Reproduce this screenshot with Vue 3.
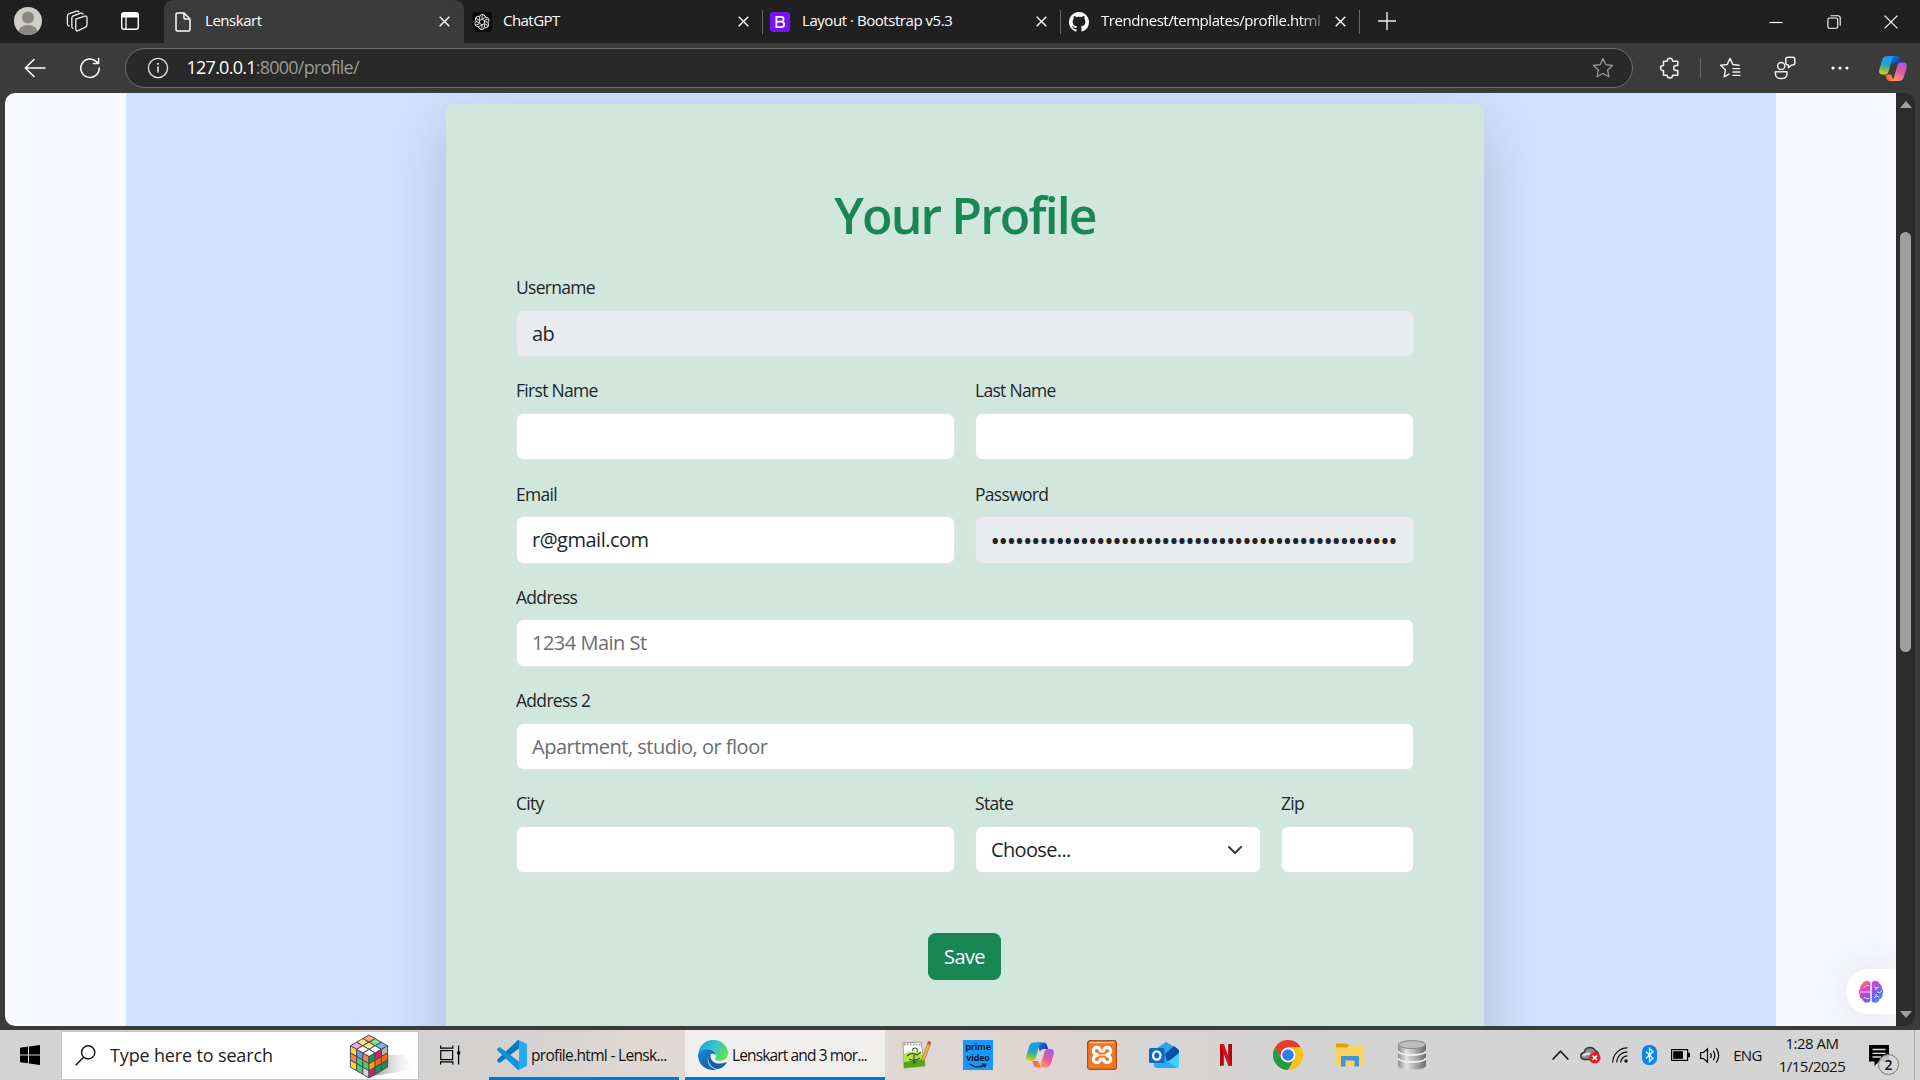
<script setup>
const tabs = [
  { title: 'Lenskart', icon: 'doc', active: true, cls: 't1' },
  { title: 'ChatGPT', icon: 'gpt', cls: 't2' },
  { title: 'Layout · Bootstrap v5.3', icon: 'boot', cls: 't3' },
  { title: 'Trendnest/templates/profile.html', icon: 'git', cls: 't4' },
]
const password = '•'.repeat(50)

const A = [25, 8.5]
const step = { r: [6.2, 3.6], l: [-6.2, 3.6], d: [0, 7.1] }
const quad = (o, u, v) => {
  const p = (a, b) => `${(o[0] + a * u[0] + b * v[0]).toFixed(1)},${(o[1] + a * u[1] + b * v[1]).toFixed(1)}`
  return (i, j) => [p(i, j), p(i + 1, j), p(i + 1, j + 1), p(i, j + 1)].join(' ')
}
const face = (o, u, v, colors) => {
  const q = quad(o, u, v)
  return colors.map((fill, k) => ({ fill, points: q(k % 3, Math.floor(k / 3)) }))
}
const cube = [
  ...face([A[0] - 5, 2], step.r, step.l, ['#f6ad7b', '#74e291', '#6db9f7', '#fbe28a', '#fbe28a', '#fff', '#f9a8d4', '#fff', '#fff']),
  ...face([1.4, 12.8], step.r, step.d, ['#fdd835', '#5b9cf5', '#ff7f50', '#ff7f50', '#45cf74', '#45cf74', '#fdd835', '#45cf74', '#d8d8d8']),
  ...face([20, 23.6], [6.2, -3.6], step.d, ['#268c56', '#d81b78', '#b5b5b5', '#f5a60a', '#f26a0f', '#f26a0f', '#d81b78', '#268c56', '#268c56']),
]
</script>

<template>
  <div class="screen">
    <svg class="defs" width="0" height="0" aria-hidden="true">
      <defs>
        <linearGradient id="cpA" x1="0.3" y1="0" x2="0.1" y2="1">
          <stop offset="0" stop-color="#199de8" /><stop offset=".45" stop-color="#2aa3c4" /><stop offset=".72" stop-color="#7cc051" /><stop offset="1" stop-color="#ffd000" />
        </linearGradient>
        <linearGradient id="cpB" x1="0.8" y1="0" x2="0.3" y2="1">
          <stop offset="0" stop-color="#a259f0" /><stop offset=".5" stop-color="#e558a0" /><stop offset="1" stop-color="#ff9a5c" />
        </linearGradient>
        <linearGradient id="cpC" x1="0" y1="0" x2="1" y2="0.6">
          <stop offset="0" stop-color="#1b8ee8" /><stop offset="1" stop-color="#1735b8" />
        </linearGradient>
        <linearGradient id="cpD" x1="0" y1="0" x2="1" y2="1">
          <stop offset="0" stop-color="#ff5a4e" /><stop offset="1" stop-color="#ff8a3d" />
        </linearGradient>
        <linearGradient id="edgeTop" x1="0" y1="0.2" x2="1" y2="0.6">
          <stop offset="0" stop-color="#2a9fdd" /><stop offset=".5" stop-color="#2fc3d4" /><stop offset="1" stop-color="#66e04b" />
        </linearGradient>
        <linearGradient id="edgeLow" x1="0" y1="0" x2="1" y2="1">
          <stop offset="0" stop-color="#1c8fdc" /><stop offset="1" stop-color="#0c4f9c" />
        </linearGradient>
        <linearGradient id="brainG" x1="0" y1="0" x2="1" y2="1">
          <stop offset="0" stop-color="#ff9a3c" /><stop offset=".3" stop-color="#e83fc0" /><stop offset=".6" stop-color="#7a5af5" /><stop offset="1" stop-color="#1fa2ff" />
        </linearGradient>
        <linearGradient id="dbG" x1="0" y1="0" x2="1" y2="0">
          <stop offset="0" stop-color="#8c8c8c" /><stop offset=".3" stop-color="#e4e4e4" /><stop offset="1" stop-color="#6c6c6c" />
        </linearGradient>
        <linearGradient id="shadeG" x1="0" y1="0" x2="1" y2="0">
          <stop offset="0" stop-color="#777" /><stop offset="1" stop-color="#fff" stop-opacity="0" />
        </linearGradient>
        <symbol id="copilot" viewBox="0 0 28 26">
          <path d="M9 0.5H17.5C19.5 .5 20.6 1.6 21.2 3.6L22 7H17.5C15.6 7 14.6 8 14 10L11 .5Z" fill="url(#cpC)" />
          <path d="M7.5 19H12L15 25.5H11C9 25.5 8 24.5 7.4 22.5L6.3 19Z" fill="url(#cpD)" />
          <path d="M8.5 .5H16C14.2 .8 13.6 2.2 13 4.2L9.8 15.2C9 18 8 19 5.5 19H3.6C.6 19 -.4 17 .4 13.8L3 4.8C3.9 1.8 5.5 .5 8.5 .5Z" fill="url(#cpA)" />
          <path d="M22.4 7H24.4C27.4 7 28.4 9 27.6 12.2L25 21.2C24.1 24.2 22.5 25.5 19.5 25.5H12C13.8 25.2 14.4 23.8 15 21.8L18.2 10.8C19 8 20 7 22.4 7Z" fill="url(#cpB)" />
        </symbol>
      </defs>
    </svg>

    <header class="tabstrip">
      <div class="lead">
        <svg class="avatar" width="28" height="28" viewBox="0 0 28 28">
          <clipPath id="av"><circle cx="14" cy="14" r="14" /></clipPath>
          <g clip-path="url(#av)"><rect width="28" height="28" fill="#cfcdca" /><circle cx="14" cy="10.5" r="6" fill="#8c8680" /><ellipse cx="14" cy="25" rx="9.5" ry="7" fill="#8c8680" /></g>
        </svg>
        <svg class="spaces" width="22" height="22" viewBox="0 0 22 22" fill="none" stroke="#eee" stroke-width="1.3" stroke-linejoin="round" stroke-linecap="round">
          <path d="M9.8 9.2 18.8 6.2Q21 5.6 21 7.6V14.5Q21 16.5 19.4 17.2L12.2 20.6Q9.8 21.4 9.8 19.2Z" />
          <path d="M7 18.3Q5.8 18 5.8 16.3V8.2Q5.8 6.5 7.2 5.8L14.8 3.2Q16.8 2.8 17 4.2" />
          <path d="M3 16Q1.4 15.6 1.4 13.8V6.2Q1.4 4.6 2.8 3.8L10.6 1.2Q12.4 .8 12.8 2" />
        </svg>
        <svg class="vtabs" width="20" height="20" viewBox="0 0 20 20">
          <rect x="1.7" y="1.7" width="16.6" height="16.6" rx="2.6" fill="none" stroke="#fff" stroke-width="1.4" /><path d="M1.5 6.5V4A3 3 0 0 1 4 1.5H16A3 3 0 0 1 18.5 4V6.5Z" fill="#fff" /><path d="M6 6V18" stroke="#fff" stroke-width="1.3" />
        </svg>
      </div>
      <div v-for="t in tabs" :key="t.title" class="tab" :class="[{ active: t.active }, t.cls]">
        <svg v-if="t.icon === 'doc'" class="fav" width="20" height="20" viewBox="0 0 20 20" fill="none" stroke="#fff" stroke-width="1.5" stroke-linejoin="round"><path d="M4.5 1H11L17 7V17.5Q17 19 15.5 19H4.5Q3 19 3 17.5V2.5Q3 1 4.5 1ZM11 1V5.8Q11 7 12.2 7H17" /></svg>
        <svg v-else-if="t.icon === 'gpt'" class="fav" width="20" height="20" viewBox="0 0 20 20"><rect width="20" height="20" rx="3.5" fill="#0b0b0b" /><g fill="none" stroke="#ddd" stroke-width="1"><path v-for="a in 6" :key="a" :transform="`rotate(${a * 60} 10 10)`" d="M10 7.2 13.2 5.4Q16.2 4.6 17 7.6Q17.3 9 16.2 10.6M10 7.2V4.6Q10.2 3.4 11.4 3" /><path d="M10 7.2 12.4 8.6V11.4L10 12.8 7.6 11.4V8.6Z" /></g></svg>
        <svg v-else-if="t.icon === 'boot'" class="fav" width="20" height="20" viewBox="0 0 20 20"><rect width="20" height="20" rx="3" fill="#7a12f7" /><path d="M6.4 4.8H11Q13.6 4.8 13.6 7.2 13.6 9 11.9 9.6 14.2 10 14.2 12.3 14.2 15.2 11 15.2H6.4ZM6.4 9.6H11" fill="none" stroke="#fff" stroke-width="1.8" /></svg>
        <svg v-else class="fav" width="20" height="20" viewBox="0 0 16 16"><path fill="#fff" d="M8 0C3.58 0 0 3.58 0 8c0 3.54 2.29 6.53 5.47 7.59.4.07.55-.17.55-.38 0-.19-.01-.82-.01-1.49-2.01.37-2.53-.49-2.69-.94-.09-.23-.48-.94-.82-1.13-.28-.15-.68-.52-.01-.53.63-.01 1.08.58 1.23.82.72 1.21 1.87.87 2.33.66.07-.52.28-.87.51-1.07-1.78-.2-3.64-.89-3.64-3.95 0-.87.31-1.59.82-2.15-.08-.2-.36-1.02.08-2.12 0 0 .67-.21 2.2.82.64-.18 1.32-.27 2-.27s1.36.09 2 .27c1.53-1.04 2.2-.82 2.2-.82.44 1.1.16 1.92.08 2.12.51.56.82 1.27.82 2.15 0 3.07-1.87 3.75-3.65 3.95.29.25.54.73.54 1.48 0 1.07-.01 1.93-.01 2.2 0 .21.15.46.55.38A8.01 8.01 0 0 0 16 8c0-4.42-3.58-8-8-8z" /></svg>
        <span class="tab-title">{{ t.title }}</span>
        <svg class="x" width="11" height="11" viewBox="0 0 11 11"><path d="M.7.7 10.3 10.3M10.3.7.7 10.3" stroke="#fff" stroke-width="1.4" /></svg>
      </div>
      <svg class="plus" width="18" height="18" viewBox="0 0 18 18"><path d="M9 0V18M0 9H18" stroke="#eee" stroke-width="1.4" /></svg>
      <div class="winctl">
        <svg width="14" height="14" viewBox="0 0 14 14"><path d="M.5 7.5H13.5" stroke="#fff" stroke-width="1.2" /></svg>
        <svg width="14" height="14" viewBox="0 0 14 14" fill="none" stroke="#fff" stroke-width="1.1"><rect x=".9" y="3" width="9.8" height="10.2" rx="1.5" /><path d="M3.5 .8H11Q13.2 .8 13.2 3V10.8" /></svg>
        <svg width="14" height="14" viewBox="0 0 14 14"><path d="M.6.6 13.4 13.4M13.4.6.6 13.4" stroke="#fff" stroke-width="1.2" /></svg>
      </div>
    </header>

    <div class="toolbar">
      <svg class="back" width="22" height="20" viewBox="0 0 22 20" fill="none" stroke="#fff" stroke-width="1.5" stroke-linecap="round" stroke-linejoin="round"><path d="M21 10H1.5M10 1.5 1.3 10 10 18.5" /></svg>
      <svg class="reload" width="22" height="22" viewBox="0 0 22 22" fill="none" stroke="#fff" stroke-width="1.5" stroke-linecap="round" stroke-linejoin="round"><path d="M20.2 11A9.2 9.2 0 1 1 17.6 4.8L19.2 6.4M19.6 1.4V6.6H14.4" /></svg>
      <div class="omnibox">
        <svg width="22" height="22" viewBox="0 0 22 22" fill="none" stroke="#e6e6e6" stroke-width="1.3"><circle cx="11" cy="11" r="9.6" /><path d="M11 9.6V15.6" stroke-width="1.6" /><circle cx="11" cy="6.8" r="1.1" fill="#e6e6e6" stroke="none" /></svg>
        <span class="url"><b>127.0.0.1</b>:8000/profile/</span>
        <svg class="star" width="22" height="22" viewBox="0 0 22 22" fill="none" stroke="#999" stroke-width="1.3" stroke-linejoin="round"><path d="M11 1.6 13.8 7.6 20.5 8.5 15.6 13 16.9 19.8 11 16.5 5.1 19.8 6.4 13 1.5 8.5 8.2 7.6Z" /></svg>
      </div>
      <div class="tools">
        <svg width="22" height="22" viewBox="0 0 22 22" fill="none" stroke="#eee" stroke-width="1.5" stroke-linejoin="round"><path d="M4.5 4.2H8.2C8.2 2.4 9.3 1.2 10.9 1.2S13.6 2.4 13.6 4.2H18.8V8.6H17.2A2.5 2.5 0 0 0 17.2 13.6H18.8V18.2H13.6C13.6 19.9 12.5 21 10.9 21S8.2 19.9 8.2 18.2H4.5V13.6C2.7 13.6 1.5 12.6 1.5 11.1S2.7 8.6 4.5 8.6Z" /></svg>
        <i class="sep"></i>
        <svg class="favs" width="22" height="22" viewBox="0 0 22 22" fill="none" stroke="#eee" stroke-width="1.4" stroke-linejoin="round" stroke-linecap="round"><path d="M20 8.3 13.8 7.5 11 1.4 8.2 7.5 1.5 8.3 6.4 12.8 5.2 19.8 10 17.2M14 11.6H20.8M14 15H20.8M14 18.4H20.8" /></svg>
        <svg class="ppl" width="22" height="24" viewBox="0 0 22 24" fill="none" stroke="#eee" stroke-width="1.5" stroke-linejoin="round"><circle cx="7.2" cy="10" r="3.6" /><path d="M1.4 15.8H13V17.4C13 20.6 10.6 22.6 7.2 22.6S1.4 20.6 1.4 17.4ZM13.8 1.2H18.8Q20.8 1.2 20.8 3.2V7Q20.8 9 18.8 9H17.6L14.4 11.6V9Q11.8 9 11.8 7V3.2Q11.8 1.2 13.8 1.2Z" /></svg>
        <svg class="dots" width="18" height="6" viewBox="0 0 18 6" fill="#fff"><circle cx="2" cy="3" r="1.6" /><circle cx="9" cy="3" r="1.6" /><circle cx="16" cy="3" r="1.6" /></svg>
        <svg class="cp" width="28" height="27"><use href="#copilot" /></svg>
      </div>
    </div>

    <div class="viewport">
      <main class="page">
        <div class="band">
          <form class="card" @submit.prevent>
            <h1>Your Profile</h1>
            <div class="row"><div class="field w12"><label>Username</label><div class="input off val">ab</div></div></div>
            <div class="row">
              <div class="field w6"><label>First Name</label><div class="input"></div></div>
              <div class="field w6"><label>Last Name</label><div class="input"></div></div>
            </div>
            <div class="row">
              <div class="field w6"><label>Email</label><div class="input val">r@gmail.com</div></div>
              <div class="field w6"><label>Password</label><div class="input off pass">{{ password }}</div></div>
            </div>
            <div class="row"><div class="field w12"><label>Address</label><div class="input ph">1234 Main St</div></div></div>
            <div class="row"><div class="field w12"><label>Address 2</label><div class="input ph">Apartment, studio, or floor</div></div></div>
            <div class="row">
              <div class="field w6"><label>City</label><div class="input"></div></div>
              <div class="field w4"><label>State</label>
                <div class="input val select">Choose...<svg width="16" height="16" viewBox="0 0 16 16" fill="none" stroke="#343a40" stroke-width="2" stroke-linecap="round" stroke-linejoin="round"><path d="m2 5 6 6 6-6" /></svg></div>
              </div>
              <div class="field w2"><label>Zip</label><div class="input"></div></div>
            </div>
            <button class="save">Save</button>
          </form>
        </div>
        <div class="brain">
          <svg width="26" height="24" viewBox="0 0 26 24"><path d="M12.3 2.5Q10.5.3 8.2 1 5 .8 4.4 4 1.8 5.4 2.4 8.2 -.4 11 1.6 14.2 1 17.8 4.4 19 6 23.4 9.6 22.6 11.6 22.8 12.3 21Z M13.7 2.5Q15.5.3 17.8 1 21 .8 21.6 4 24.2 5.4 23.6 8.2 26.4 11 24.4 14.2 25 17.8 21.6 19 20 23.4 16.4 22.6 14.4 22.8 13.7 21Z" fill="url(#brainG)" /><path d="M2 12H12M6 7Q8 7 8.5 5.5H11M6 17Q8 19 11 18.5M16 6 18 8 21 7.5M18 8V10M24 11Q22 13.5 19 12M16 18 18 16 21 17M18 16V14" fill="none" stroke="#fff" stroke-opacity=".8" stroke-width="1" /></svg>
        </div>
      </main>
      <div class="scrollbar"><i class="up"></i><div class="thumb"></div><i class="down"></i></div>
    </div>

    <footer class="taskbar">
      <div class="start"><svg width="20" height="20" viewBox="0 0 20 20"><path d="M0 2.8 8 1.6V9.4H0ZM9 1.4 20 0V9.4H9ZM0 10.4H8V18.3L0 17.2ZM9 10.4H20V20L9 18.5Z" /></svg></div>
      <div class="search">
        <svg class="mag" width="21" height="21" viewBox="0 0 21 21" fill="none" stroke="#111" stroke-width="1.4"><circle cx="13.2" cy="7.4" r="6.6" /><path d="M8.6 12.2.6 20.2" /></svg>
        <span>Type here to search</span>
        <svg class="cube" width="68" height="46" viewBox="0 0 68 46">
          <path d="M34 22H54L68 36 24 43Z" fill="url(#shadeG)" opacity=".8" />
          <polygon v-for="(f, i) in cube" :key="i" :points="f.points" :fill="f.fill" stroke="#4a4a4a" stroke-width="1" stroke-linejoin="round" />
        </svg>
      </div>
      <div class="tview"><svg width="21" height="20" viewBox="0 0 21 20" fill="none" stroke="#000" stroke-width="1.2"><rect x=".8" y="5.6" width="11.8" height="9" /><path d="M.6 .5V3.2H12.8V.5M.6 19.5V16.8H12.8V19.5M18.6 .5V19.5" /><rect x="17.2" y="6.4" width="3" height="3" fill="#000" stroke="none" /></svg></div>
      <div class="task vs">
        <svg width="30" height="30" viewBox="0 0 30 30"><path d="M22 .3 29 3.6Q30 4 30 5.4V24.6Q30 26 29 26.4L22 29.7Z" fill="#29a9f2" /><path d="M22 .3V8.4L3.4 22.6Q2.6 23.1 1.8 22.5L.4 21.2Q-.4 20.4.4 19.5L20.4.6Q21 0 22 .3Z" fill="#0a79c4" /><path d="M22 29.7V21.6L3.4 7.4Q2.6 6.9 1.8 7.5L.4 8.8Q-.4 9.6.4 10.5L20.4 29.4Q21 30 22 29.7Z" fill="#0f92dc" /></svg>
        <span>profile.html - Lensk...</span>
      </div>
      <div class="task edge">
        <svg width="30" height="30" viewBox="0 0 30 30"><path d="M.3 14C1 6 7 0 15 0 24 0 30 6.2 30 13 30 18 26.400 20.800 22 20.800 18 20.800 16.600 19.400 17.400 18 19.400 14.600 18 9.500 11 9.500 5.500 9.500 1.500 12.500.3 16Z" fill="url(#edgeTop)" /><path d="M0 15C.8 11.500 4.500 9.200 9.500 9.200 14 9.200 17.800 11.500 18 15 14 11.800 9.200 15.400 9.800 20.400 10.200 25.600 14 29 19 29.300 9 32 0 25 0 15Z" fill="url(#edgeLow)" /><path d="M10.500 15.500C8.500 23 15 31 22 28.600 25 27.200 27 25.500 28.500 23 28.800 22.300 28.300 22 27.700 22.300 20.500 25.200 12 23 12.500 15 12.200 13.800 11 14 10.500 15.500Z" fill="#1261ae" /></svg>
        <span>Lenskart and 3 mor...</span>
      </div>
      <div class="pins">
        <div><svg width="30" height="30" viewBox="0 0 30 30"><path d="M2 3 20 2 24 26 3 28Z" fill="#fff" stroke="#888" stroke-width=".8" /><path d="M2.500 14Q12 9 22 14L24 26 3 28Z" fill="#b6e34a" /><path d="M3 22 23.500 19 24 26 3 28Z" fill="#51a812" /><path d="M3 4.500H20" stroke="#999" stroke-dasharray="1.500 1.500" stroke-width="2" /><path d="M6 16Q10 12 16 15L20 12M8 19Q13 22 19 18M12 11Q11 8 14 8T16 12M13 15V23L16 22" fill="none" stroke="#2f5a20" stroke-width="1.200" /><path d="M27.500 1 30 2.500 23.500 20 21 22 21 18.500Z" fill="#f2b63c" stroke="#93601d" stroke-width=".6" /><path d="M27.500 1 30 2.500 29 5.500 26.400 4Z" fill="#c8535b" /></svg></div>
        <div><div class="prime"><span>prime</span><span>video</span><svg width="22" height="6" viewBox="0 0 22 7" fill="none" stroke="#062033" stroke-width="1.500"><path d="M1 .8Q9 7 18.500 2.800M15.500 1.200 20 1.200 18.800 5" /></svg></div></div>
        <div><svg width="28" height="26"><use href="#copilot" /></svg></div>
        <div><svg width="30" height="30" viewBox="0 0 30 30"><rect x=".6" y=".6" width="28.800" height="28.800" rx="2.500" fill="#f37623" stroke="#a9501a" stroke-width="1.200" /><path d="M3 2.600H27" stroke="#fbb98a" stroke-width="1.500" /><path d="M10 11.500 20 18.500M20 11.500 10 18.500" stroke="#fff" stroke-width="5" /><path d="M11.500 12.500H18.500V17.500H11.500Z" fill="#fff" /><g fill="#f37623" stroke="#fff" stroke-width="3.200"><circle cx="9.800" cy="10.800" r="3.500" /><circle cx="20.200" cy="10.800" r="3.500" /><circle cx="9.800" cy="19.200" r="3.500" /><circle cx="20.200" cy="19.200" r="3.500" /></g><path d="M9.800 10.800 12.500 13.500H17.500L20.200 10.800M9.800 19.200 12.500 16.500H17.500L20.200 19.200" fill="none" stroke="#f37623" stroke-width="2" /></svg></div>
        <div><svg width="30" height="28" viewBox="0 0 30 28"><path d="M5 9 17 1 29 8V13L17 20 5 15Z" fill="#2aa5e8" /><path d="M16 13 25 5 30 9V14L18 21Z" fill="#0b50a4" /><path d="M30 12V25Q30 27 28 27H12Z" fill="#3fd2fb" /><path d="M5 16H13L28 27H8Q5 27 5 24Z" fill="#29a9ee" /><rect x="0" y="7" width="15.500" height="15" rx="1.500" fill="#0b6ac7" /><ellipse cx="7.800" cy="14.500" rx="3.700" ry="4.200" fill="none" stroke="#fff" stroke-width="2.200" /></svg></div>
        <div><svg width="12" height="22" viewBox="0 0 12 22"><path d="M0 0H3.800V21.400L0 22ZM8.200 0H12V22L8.200 21.400Z" fill="#b1060f" /><path d="M0 0H3.800L12 22 8.200 21.400Z" fill="#e50914" /></svg></div>
        <div><svg width="30" height="30" viewBox="0 0 30 30"><path d="M2 7.500A15 15 0 0 1 28 7.500H15L8.500 18.750Z" fill="#e33b2e" /><path d="M28 7.500A15 15 0 0 1 15 30L21.500 18.750 15 7.500Z" fill="#fbc116" /><path d="M15 30A15 15 0 0 1 2 7.500L8.500 18.750H21.500Z" fill="#249a41" /><path d="M15 30 21.500 18.750 15 15 23 7.500H28A15 15 0 0 1 15 30Z" fill="#fbc116" /><circle cx="15" cy="15" r="7.400" fill="#fff" /><circle cx="15" cy="15" r="5.800" fill="#2f7ef0" /></svg></div>
        <div><svg width="28" height="24" viewBox="0 0 28 24"><path d="M0 1.500Q0 .5 1 .5H11L14 3.500 11 6H0Z" fill="#e0a106" /><path d="M0 4.500H11L13 3H27Q28 3 28 4V22Q28 23 27 23H1Q0 23 0 22Z" fill="#ffd45e" /><path d="M5 23.500V14Q5 13 6 13H22Q23 13 23 14V23.500H18.500V17.500H9.500V23.500Z" fill="#3d94d6" /></svg></div>
        <div><svg width="28" height="30" viewBox="0 0 28 30"><path d="M0 5V25Q0 29.500 14 29.500T28 25V5Z" fill="url(#dbG)" /><path d="M0 11Q1 15 14 15T28 11M0 18Q1 22 14 22T28 18" fill="none" stroke="#efefef" stroke-width="1.800" /><ellipse cx="14" cy="4.600" rx="13.600" ry="4" fill="#bdbdbd" stroke="#777" stroke-width=".8" /></svg></div>
      </div>
      <div class="tray">
        <div class="c1"><svg width="17" height="10" viewBox="0 0 17 10"><path d="M.6 9.400 8.500 1.200 16.400 9.400" fill="none" stroke="#000" stroke-width="1.400" /></svg></div>
        <div class="c2"><svg width="21" height="18" viewBox="0 0 21 18"><path d="M4 13.500Q.8 13 .8 10 .8 7 4 6.500 5 1.500 10 1.500 14 1.500 15.500 5 18.500 5.500 18.500 9V13.500Z" fill="#8d8d8d" stroke="#333" stroke-width="1.400" /><path d="M3 10Q6 6 12 9" stroke="#ddd" stroke-width="2.500" fill="none" /><circle cx="14.800" cy="11.800" r="5.800" fill="#e0202a" /><path d="M12.600 9.600 17 14M17 9.600 12.600 14" stroke="#fff" stroke-width="1.500" /></svg></div>
        <div class="c3"><svg width="17" height="16" viewBox="0 0 17 16" fill="none" stroke="#111" stroke-width="1.200"><path d="M.8 15.500A14.700 14.700 0 0 1 15.500 .8M4.800 15.500A10.700 10.700 0 0 1 15.500 4.800M8.800 15.500A6.700 6.700 0 0 1 15.500 8.800" /><circle cx="14" cy="14" r="1.700" fill="#111" stroke="none" /></svg></div>
        <div class="c4"><svg width="15" height="20" viewBox="0 0 15 20"><rect width="15" height="20" rx="6.500" fill="#0a84f5" /><path d="M3.800 6.500 11 13.200 7.500 16.500V3.500L11 6.800 3.800 13.500" fill="none" stroke="#fff" stroke-width="1.200" /></svg></div>
        <div class="c5"><svg width="19" height="12" viewBox="0 0 19 12"><rect x=".6" y=".6" width="16" height="10.800" fill="none" stroke="#000" stroke-width="1.200" /><rect x="2.200" y="2.200" width="9.800" height="7.600" /><rect x="17" y="3.800" width="2" height="4.400" /></svg></div>
        <div class="c6"><svg width="21" height="17" viewBox="0 0 21 17" fill="none" stroke="#000" stroke-width="1.200"><path d="M.6 5.500H3.500L7.500 1.800V15.200L3.500 11.500H.6ZM10.500 6Q12 8.500 10.500 11M13.300 3.800Q16.300 8.500 13.300 13.200M16.300 1.200Q21 8.500 16.300 15.800" /></svg></div>
        <div class="c7">ENG</div>
        <div class="c8"><span class="time">1:28 AM</span><span class="date">1/15/2025</span></div>
        <div class="c9">
          <svg width="20" height="21" viewBox="0 0 20 21"><path d="M0 0H20V16.500H10L5.500 21V16.500H0Z" /><path d="M3.500 4.500H16.500M3.500 8.300H16.500M3.500 12H12" stroke="#ddd" stroke-width="1.300" /></svg>
          <span class="badge">2</span>
        </div>
      </div>
    </footer>
  </div>
</template>

<style>
html, body { margin: 0; overflow: hidden; background: #3b3b3b; }
</style>

<style scoped>
.screen { width: 1920px; height: 1080px; display: flex; flex-direction: column; background: #3b3b3b; font-family: "Open Sans", "Noto Sans", sans-serif; overflow: hidden; white-space: nowrap; }
.screen * { box-sizing: border-box; }
svg { display: block; flex: none; }
.defs { position: absolute; }

.tabstrip { height: 43px; flex: none; display: flex; background: #202020; color: #fff; }
.lead { width: 164px; display: flex; align-items: center; height: 42px; padding-left: 14px; }
.spaces { margin-left: 24px; }
.vtabs { margin-left: 32px; }
.tab { height: 43px; display: flex; align-items: center; font-size: 15px; position: relative; border-right: 1px solid transparent; }
.tab::after { content: ""; position: absolute; right: -1px; top: 10px; height: 24px; width: 1px; background: #6a6a6a; }
.t1 { width: 300px; padding-left: 9px; padding-right: 13px; }
.t2 { width: 299px; padding-left: 8px; padding-right: 13px; }
.t3 { width: 298px; padding-left: 7px; padding-right: 13px; }
.t4 { width: 299px; padding-left: 8px; padding-right: 13px; }
.active { background: #3b3b3b; border-radius: 9px 9px 0 0; }
.active::after { display: none; }
.tab-title { flex: 1; margin: 0 8px 3px 12px; letter-spacing: -.45px; line-height: 24px; }
.t2 .tab-title { margin-left: 11px; letter-spacing: -.55px; }
.t4 .tab-title { margin-right: 8px; mask-image: linear-gradient(90deg, #000 198px, rgba(0, 0, 0, .25) 221px); }
.plus { margin: 12px 0 0 18px; }
.winctl { margin-left: auto; display: flex; gap: 43.500px; align-items: center; padding-right: 22px; height: 43px; }

.toolbar { height: 50px; flex: none; display: flex; align-items: center; background: #3b3b3b; }
.back { margin-left: 24px; }
.reload { margin-left: 33px; }
.omnibox { margin-left: 24px; width: 1508px; height: 40px; border: 1px solid #6b6b6b; border-radius: 20px; background: #292929; display: flex; align-items: center; padding: 0 18px 0 21px; }
.url { flex: 1; margin: -2px 0 0 17.500px; font-size: 18px; letter-spacing: -.75px; color: #9a9a9a; }
.url b { font-weight: 400; color: #fff; }
.tools { display: flex; align-items: center; margin-left: 26px; }
.sep { width: 1px; height: 20px; background: #666; margin-left: 19px; }
.favs { margin-left: 18px; }
.ppl { margin-left: 33px; }
.dots { margin-left: 35px; }
.cp { margin-left: 30px; }

.viewport { height: 933px; margin: 0 5px; flex: none; display: flex; border-radius: 10px; overflow: hidden; background: #2c2c2c; }
.page { width: 1891px; background: #f8f9ff; position: relative; padding-left: 121px; overflow: hidden; }
.band { width: 1650px; height: 100%; background: #cfe2ff; padding: 11px 292px 0 320px; overflow: hidden; }
.card { width: 1038px; height: 1020px; background: #d1e7dd; border-radius: 8px; box-shadow: 0 20px 60px rgba(0, 0, 0, .175); padding: 81px 70px 0; display: flex; flex-direction: column; }
h1 { margin: 0 0 29px; font-size: 50px; line-height: 60px; font-weight: 600; color: #198754; text-align: center; letter-spacing: -1.900px; }
.row { display: flex; gap: 20px; margin-bottom: 20.250px; }
.field { display: flex; flex-direction: column; }
.w12 { width: 898px; } .w6 { width: 439px; } .w4 { width: 286px; } .w2 { width: 133px; }
label { font-size: 17.500px; line-height: 27px; margin-bottom: 8.500px; color: #212529; letter-spacing: -.7px; }
.input { height: 47.500px; border: 1px solid #dee2e6; border-radius: 7.500px; background: #fff; font-size: 20px; line-height: 45px; padding: 0 15px; color: #212529; letter-spacing: -.5px; }
.off { background: #e9ecef; }
.ph { color: #6a6d71; }
.pass { overflow: hidden; font-size: 25px; line-height: 47px; letter-spacing: -1.280px; padding-right: 0; padding-left: 14.500px; }
.select { display: flex; justify-content: space-between; align-items: center; padding-right: 17px; letter-spacing: -.65px; }
.save { align-self: center; margin: 39px 1px 0 0; width: 73px; height: 47px; border: 0; border-radius: 7.500px; background: #198754; color: #fff; font: 500 20px/48px "Open Sans", sans-serif; letter-spacing: -.6px; padding: 0; }
.brain { position: absolute; right: 0; top: 876px; width: 50px; height: 45px; background: #fff; border-radius: 23px 0 0 23px; padding: 11px 0 0 12px; box-shadow: 0 0 40px rgba(60, 60, 90, .14); }
.scrollbar { width: 19px; display: flex; flex-direction: column; align-items: center; padding: 8px 0; }
.up, .down { width: 0; height: 0; border: 6.500px solid transparent; }
.up { border-top: 0; border-bottom: 7px solid #a0a0a0; }
.down { border-bottom: 0; border-top: 7px solid #a0a0a0; margin-top: auto; }
.thumb { width: 11px; height: 420px; border-radius: 6px; background: #9f9f9f; margin-top: 124px; }

.taskbar { margin-top: 4px; height: 50px; display: flex; background: linear-gradient(90deg, #d3d3d3 0, #d3d2d1 500px, #dfd8d5 640px, #ddd6d3 1050px, #d3d3d3 1300px, #d5d5d5 100%); color: #111; }
.start { width: 61px; display: flex; align-items: center; justify-content: center; }
.start svg { margin-left: -1px; }
.search { width: 358px; height: 49px; background: #fff; border: 1px solid #c4c4c4; margin-top: 1px; display: flex; align-items: center; padding-left: 13px; }
.search span { font-size: 18px; margin: -1px 0 0 14px; letter-spacing: -.15px; width: 239px; color: #222; }
.tview { width: 70px; display: flex; align-items: center; padding-left: 21px; }
.task { height: 50px; display: flex; align-items: center; border-bottom: 3px solid #0078d7; font-size: 15.500px; letter-spacing: -.68px; }
.task svg { margin-top: 2px; }
.task span { margin: 3px 0 0 4px; }
.vs { width: 190px; padding-left: 8px; }
.edge { width: 200px; margin-left: 6px; padding-left: 13px; background: #f1efee; letter-spacing: -.87px; }
.pins { display: flex; }
.pins > div { width: 62px; display: flex; align-items: center; justify-content: center; }
.prime { width: 30px; height: 30px; background: #1a98ff; display: flex; flex-direction: column; align-items: center; padding-top: 1px; font: 700 9px/11px "Open Sans", sans-serif; color: #062033; letter-spacing: -.2px; }
.tray { margin-left: auto; display: flex; width: 377px; }
.tray > div { display: flex; align-items: center; justify-content: center; flex: none; }
.c1 { width: 34px; } .c2 { width: 26px; } .c3 { width: 35px; } .c4 { width: 23px; } .c5 { width: 39px; } .c6 { width: 20px; }
.tray .c7 { width: 55px; font-size: 15px; letter-spacing: -.6px; }
.tray .c8 { width: 74px; flex-direction: column; font-size: 15px; line-height: 23px; letter-spacing: -.5px; padding-bottom: 1px; }
.tray .c9 { width: 66px; position: relative; border-right: 1px solid #aaa; padding-right: 6px; }
.badge { position: absolute; left: 29px; top: 24px; width: 21px; height: 21px; border-radius: 50%; border: 1px solid #777; background: rgba(214, 214, 214, .88); font-size: 14px; line-height: 19px; text-align: center; font-weight: 600; }
</style>
